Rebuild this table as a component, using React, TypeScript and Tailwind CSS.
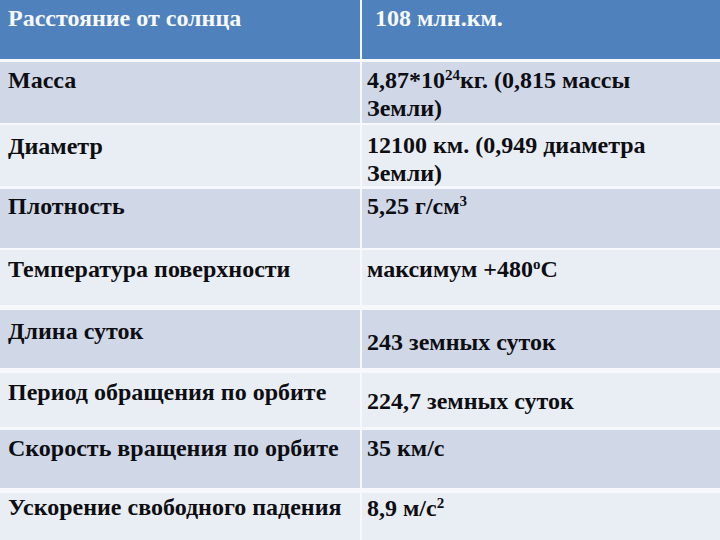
import type { ReactNode } from "react";

interface Row {
  label: string;
  value: ReactNode;
  height: string;
  gap: string;
  labelPad: string;
  valuePad: string;
  dark: boolean;
}

function Sup({ children }: { children: ReactNode }) {
  return <span className="align-[8px] text-[15px] leading-none">{children}</span>;
}

const rows: Row[] = [
  {
    label: "Масса",
    value: (
      <>
        4,87*10<Sup>24</Sup>кг. (0,815 массы Земли)
      </>
    ),
    height: "h-[61px]",
    gap: "mt-[3px]",
    labelPad: "pt-[4px]",
    valuePad: "pt-[4px]",
    dark: true,
  },
  {
    label: "Диаметр",
    value: "12100 км. (0,949 диаметра Земли)",
    height: "h-[61px]",
    gap: "mt-[2px]",
    labelPad: "pt-[7px]",
    valuePad: "pt-[6px]",
    dark: false,
  },
  {
    label: "Плотность",
    value: (
      <>
        5,25 г/см<Sup>3</Sup>
      </>
    ),
    height: "h-[59px]",
    gap: "mt-[3px]",
    labelPad: "pt-[3px]",
    valuePad: "pt-[3px]",
    dark: true,
  },
  {
    label: "Температура поверхности",
    value: (
      <>
        максимум +480<Sup>о</Sup>С
      </>
    ),
    height: "h-[55px]",
    gap: "mt-[2px]",
    labelPad: "pt-[5px]",
    valuePad: "pt-[5px]",
    dark: false,
  },
  {
    label: "Длина суток",
    value: "243 земных суток",
    height: "h-[58px]",
    gap: "mt-[5px]",
    labelPad: "pt-[7px]",
    valuePad: "pt-[18px]",
    dark: true,
  },
  {
    label: "Период обращения по орбите",
    value: "224,7 земных суток",
    height: "h-[54px]",
    gap: "mt-[5px]",
    labelPad: "pt-[5px]",
    valuePad: "pt-[14px]",
    dark: false,
  },
  {
    label: "Скорость вращения по орбите",
    value: "35 км/с",
    height: "h-[58px]",
    gap: "mt-[3px]",
    labelPad: "pt-[4px]",
    valuePad: "pt-[4px]",
    dark: true,
  },
  {
    label: "Ускорение свободного падения",
    value: (
      <>
        8,9 м/с<Sup>2</Sup>
      </>
    ),
    height: "h-[47px]",
    gap: "mt-[5px]",
    labelPad: "pt-0",
    valuePad: "pt-[1px]",
    dark: false,
  },
];

export default function App() {
  return (
    <div className="flex h-[540px] w-[720px] flex-col overflow-hidden bg-[#f6f8fb] font-['Liberation_Serif','Times_New_Roman',serif] text-[24px] font-bold leading-[28px] text-[#0d0d12]">
      {/* Header */}
      <div className="flex h-[59px] gap-[2px] text-[#f7f9fd]">
        <div className="w-[360px] bg-[#4f81bd] pl-2 pt-[4px]">Расстояние от солнца</div>
        <div className="flex-1 bg-[#4f81bd] pl-[13px] pt-[4px]">108 млн.км.</div>
      </div>

      {rows.map((row) => (
        <div key={row.label} className={`flex gap-[2px] ${row.height} ${row.gap}`}>
          <div
            className={`w-[360px] whitespace-nowrap pl-2 ${row.labelPad} ${row.dark ? "bg-[#d0d8e8]" : "bg-[#e9edf4]"}`}
          >
            {row.label}
          </div>
          <div
            className={`flex-1 pl-[5px] pr-16 ${row.valuePad} ${row.dark ? "bg-[#d0d8e8]" : "bg-[#e9edf4]"}`}
          >
            {row.value}
          </div>
        </div>
      ))}
    </div>
  );
}
